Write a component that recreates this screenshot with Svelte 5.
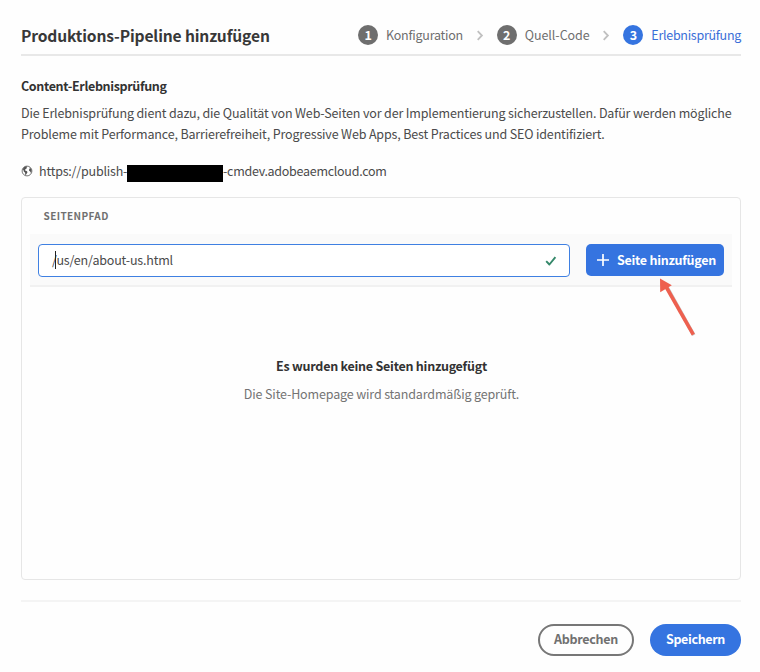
<script>
  const steps = [
    { n: 1, label: 'Konfiguration', cls: 'konfig' },
    { n: 2, label: 'Quell-Code', cls: 'quell' },
    { n: 3, label: 'Erlebnisprüfung', cls: 'active' }
  ];
</script>

<main>
  <header>
    <h1>Produktions-Pipeline hinzufügen</h1>
    <nav>
      {#each steps as step, i}
        {#if i > 0}
          <svg class="chevron" width="8" height="11" viewBox="0 0 8 11"><path d="M1.7 1.2 5.9 5.5 1.7 9.8" fill="none" stroke="#c0c0c0" stroke-width="1.8" /></svg>
        {/if}
        <div class="step {step.cls}"><b>{step.n}</b><span>{step.label}</span></div>
      {/each}
    </nav>
  </header>

  <h2>Content-Erlebnisprüfung</h2>
  <p class="intro">
    <span class="line">Die Erlebnisprüfung dient dazu, die Qualität von Web-Seiten vor der Implementierung sicherzustellen. Dafür werden mögliche</span>
    <span class="line">Probleme mit Performance, Barrierefreiheit, Progressive Web Apps, Best Practices und SEO identifiziert.</span>
  </p>

  <div class="url">
    <svg width="12" height="12" viewBox="0 0 12 12">
      <circle cx="6" cy="6" r="4.9" fill="#fff" stroke="#666" stroke-width="0.9" />
      <path d="M1.6 4.2 3.2 2.1 5.6 1.3 6.2 2 5.4 2.9 5.6 3.7 4.3 4.3 4.1 5.4 5.6 5.9 6.5 6.9 6 8.3 5.2 9.2 4.9 10.5 4.2 9.4 4.1 7.8 2.8 6.6 2.4 5.1ZM8.4 2.6 9.4 2.9 10.5 4.8 10.4 7 9.7 7.8 9.2 6.4 8.1 5.8 8 4.6 8.8 3.8Z" fill="#555" />
    </svg>
    <span class="host">https://publish-</span><i class="redacted"></i><span class="domain">-cmdev.adobeaemcloud.com</span>
  </div>

  <section class="panel">
    <div class="column">SEITENPFAD</div>
    <div class="row">
      <div class="field">
        <span>/us/en/about-us.html</span><i class="caret"></i>
        <svg width="12" height="10" viewBox="0 0 12 10"><path d="M1.2 5.2 4.4 8.5 10.4 1.1" fill="none" stroke="#35886a" stroke-width="1.9" stroke-linejoin="round" /></svg>
      </div>
      <button class="add">
        <svg width="12" height="12" viewBox="0 0 12 12"><path d="M6 .5V11.5M.5 6H11.5" stroke="#fff" stroke-width="1.7" stroke-linecap="round" /></svg>
        <span>Seite hinzufügen</span>
      </button>
    </div>
    <div class="empty">
      <strong>Es wurden keine Seiten hinzugefügt</strong>
      <span>Die Site-Homepage wird standardmäßig geprüft.</span>
    </div>
    <svg class="arrow" width="42" height="64" viewBox="0 0 42 64">
      <path d="M9.1 9.5 35.8 57.2" stroke="#777" stroke-opacity=".4" stroke-width="3.6" fill="none" />
      <path d="M8.5 9.5 35.3 56.6" stroke="#ee604f" stroke-width="3.6" fill="none" />
      <path d="M2 .5 13.8 7.3 2.2 14.2Z" fill="#ee604f" />
    </svg>
  </section>

  <footer>
    <button class="cancel">Abbrechen</button>
    <button class="save">Speichern</button>
  </footer>
</main>

<style>
  :global(body) { background: #fff; }
  main {
    box-sizing: border-box;
    width: 760px;
    height: 672px;
    padding: 0 19px 0 21px;
    overflow: hidden;
    background: #fefefe;
    color: #4b4b4b;
    font: 12.5px/21px "Noto Sans CJK SC", "Noto Sans", sans-serif;
    letter-spacing: -0.145px;
    white-space: nowrap;
  }
  header {
    display: flex;
    justify-content: space-between;
    box-sizing: border-box;
    height: 56px;
    padding-top: 14px;
    border-bottom: 2px solid #e8e8e8;
  }
  h1, h2, p { margin: 0; }
  h1 { color: #383838; font-size: 15.6px; line-height: 42px; font-weight: 600; letter-spacing: -0.14px; }
  nav { display: flex; align-items: center; height: 42px; }
  .step { display: flex; align-items: center; color: #6e6e6e; }
  .step b {
    width: 20px;
    height: 20px;
    margin-right: 8px;
    border-radius: 50%;
    background: #6e6e6e;
    color: #fff;
    text-align: center;
    line-height: 19px;
  }
  .step span { padding-bottom: 2px; }
  .konfig { letter-spacing: -0.23px; }
  .quell { letter-spacing: -0.05px; }
  .active { color: #3a6fd8; letter-spacing: -0.28px; }
  .step.active b { background: #3574e0; }
  .chevron { margin: 0 13px 0 12.7px; }
  h2 { margin-top: 19px; color: #323232; font-size: 12.5px; line-height: 21px; font-weight: 600; letter-spacing: -0.35px; }
  .intro { margin-top: 6px; }
  .line { display: block; }
  .line + .line { letter-spacing: -0.155px; }
  .url { display: flex; align-items: center; height: 21px; margin-top: 16px; }
  .url svg { margin-right: 6px; }
  .host { width: 88px; letter-spacing: -0.2px; }
  .redacted { width: 96px; height: 17px; margin-top: 5px; background: #000; }
  .domain { letter-spacing: -0.28px; }
  .panel {
    position: relative;
    box-sizing: border-box;
    height: 383px;
    margin-top: 16px;
    padding: 0 8px;
    border: 1px solid #e6e6e6;
    border-radius: 4px;
  }
  .column { height: 36px; padding-left: 13.5px; color: #707070; font-size: 10px; line-height: 36px; font-weight: 600; letter-spacing: 0.4px; }
  .row {
    display: flex;
    box-sizing: border-box;
    height: 53px;
    padding: 10px 8px 0;
    border-bottom: 2px solid #f1f1f1;
    background: #fafafa;
  }
  .field {
    position: relative;
    display: flex;
    align-items: center;
    justify-content: space-between;
    box-sizing: border-box;
    width: 532px;
    height: 33px;
    padding: 0 12px 0 13px;
    border: 1px solid #3f80e2;
    border-radius: 4px;
    background: #fff;
    letter-spacing: -0.18px;
  }
  .field span, .add span { padding-bottom: 2px; }
  .caret { position: absolute; left: 16px; top: 6px; width: 1px; height: 18px; background: #222; }
  button { border: 0; padding: 0; font: inherit; font-weight: 700; }
  .add {
    display: flex;
    align-items: center;
    width: 138px;
    height: 32px;
    margin-left: 16px;
    padding-left: 11px;
    border-radius: 5px;
    background: #3574e0;
    color: #fff;
    letter-spacing: -0.26px;
  }
  .add svg { margin-right: 8px; }
  .empty { display: flex; flex-direction: column; align-items: center; margin-top: 65px; padding-left: 1px; line-height: 28px; color: #747474; }
  .empty strong { color: #323232; letter-spacing: -0.24px; }
  .arrow { position: absolute; left: 635.5px; top: 79.5px; }
  footer {
    display: flex;
    justify-content: flex-end;
    gap: 16px;
    margin-top: 20px;
    padding-top: 22px;
    border-top: 2px solid #f4f4f4;
  }
  footer button { box-sizing: border-box; height: 32px; border-radius: 16px; padding-bottom: 3px; }
  .cancel { width: 96px; border: 2px solid #777; background: #fefefe; color: #707070; letter-spacing: -0.28px; }
  .save { width: 91px; background: #3574e0; color: #fff; letter-spacing: -0.35px; }
</style>
